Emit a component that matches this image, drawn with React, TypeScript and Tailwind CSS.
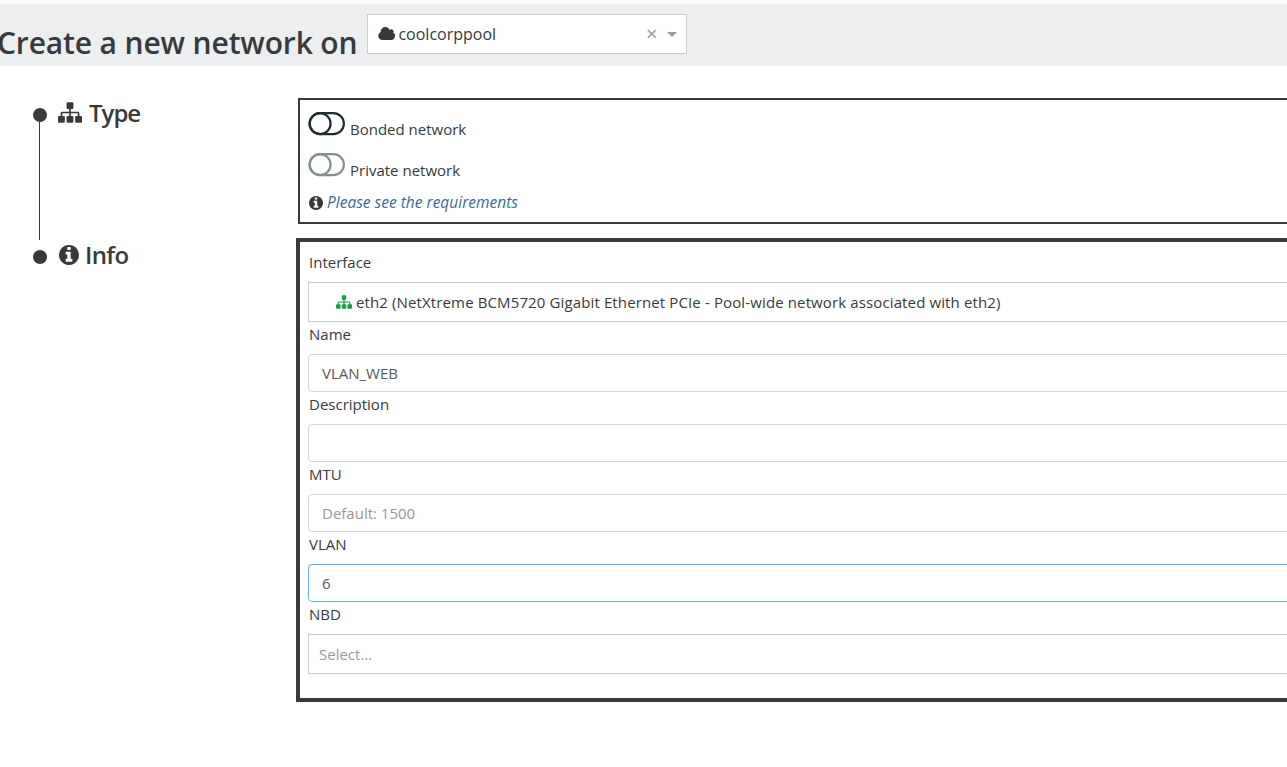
import React from 'react';

const font = "font-['Open_Sans','Noto_Sans',sans-serif]";

const SitemapIcon = ({ className }: { className?: string }) => (
  <svg viewBox="0 128 1792 1536" fill="currentColor" className={className}>
    <path d="M1792 1248v320q0 40-28 68t-68 28h-320q-40 0-68-28t-28-68v-320q0-40 28-68t68-28h96v-192h-512v192h96q40 0 68 28t28 68v320q0 40-28 68t-68 28h-320q-40 0-68-28t-28-68v-320q0-40 28-68t68-28h96v-192h-512v192h96q40 0 68 28t28 68v320q0 40-28 68t-68 28h-320q-40 0-68-28t-28-68v-320q0-40 28-68t68-28h96v-192q0-52 38-90t90-38h512v-192h-96q-40 0-68-28t-28-68v-320q0-40 28-68t68-28h320q40 0 68 28t28 68v320q0 40-28 68t-68 28h-96v192h512q52 0 90 38t38 90v192h96q40 0 68 28t28 68z" />
  </svg>
);

const InfoIcon = ({ className }: { className?: string }) => (
  <svg viewBox="128 128 1536 1536" fill="currentColor" className={className}>
    <path d="M1152 1376v-160q0-14-9-23t-23-9h-96v-512q0-14-9-23t-23-9h-320q-14 0-23 9t-9 23v160q0 14 9 23t23 9h96v320h-96q-14 0-23 9t-9 23v160q0 14 9 23t23 9h448q14 0 23-9t9-23zm-128-896v-160q0-14-9-23t-23-9h-192q-14 0-23 9t-9 23v160q0 14 9 23t23 9h192q14 0 23-9t9-23zm640 416q0 209-103 385.5t-279.5 279.5-385.5 103-385.5-103-279.5-279.5-103-385.5 103-385.5 279.5-279.5 385.5-103 385.5 103 279.5 279.5 103 385.5z" />
  </svg>
);

const CloudIcon = ({ className }: { className?: string }) => (
  <svg viewBox="-64 192 1792 1408" fill="currentColor" className={className}>
    <path d="M1728 1216q0 159-112.5 271.5t-271.5 112.5h-960q-185 0-316.5-131.5t-131.5-316.5q0-132 71-241.5t187-163.5q-2-28-2-43 0-212 150-362t362-150q158 0 286.5 88t187.5 230q70-62 166-62 106 0 181 75t75 181q0 75-41 138 129 30 213 134.5t84 239.5z" />
  </svg>
);

const Toggle = ({ color }: { color: string }) => (
  <svg width="37" height="24" viewBox="0 0 37 24" fill="none" stroke={color} strokeWidth="2.2" className="shrink-0">
    <rect x="1.6" y="1.1" width="34.3" height="21" rx="10.5" />
    <circle cx="12.1" cy="11.6" r="10.5" />
  </svg>
);

const Label = ({ children }: { children: React.ReactNode }) => (
  <div className="ml-px h-8 text-[15px] leading-6 text-[#373a3c]">{children}</div>
);

const Field = ({ label, value, placeholder, focused }: { label: string; value?: string; placeholder?: string; focused?: boolean }) => (
  <>
    <Label>{label}</Label>
    <div
      className={`flex h-[38px] items-center rounded-[4px] border pl-[13px] text-[15px] text-[#55595c] ${
        focused ? 'border-[#66afe9]' : 'border-[#d5d5d5]'
      }`}
    >
      {value ?? <span className="text-[#999999]">{placeholder}</span>}
    </div>
  </>
);

export default function App() {
  return (
    <div className={`h-[767px] w-[1287px] overflow-hidden bg-white text-[#373a3c] ${font}`}>
      <div className="h-1 bg-[#fafafa]" />
      <div className="flex h-[62px] items-start bg-[#eceeef]">
        <h1 className="-ml-[3px] mt-[19px] whitespace-nowrap text-[30px] font-semibold leading-10 tracking-[-0.14px]">
          Create a new network on
        </h1>
        <div className="ml-[10px] mt-[10px] flex h-10 w-[320px] shrink-0 items-center border border-[#cccccc] bg-white pl-[10px] pr-[9px]">
          <CloudIcon className="h-[13px] w-[17px] -translate-y-px text-[#373a3c]" />
          <span className="ml-[3px] text-base font-medium">coolcorppool</span>
          <span className="ml-auto text-[20px] leading-none text-[#999999]">×</span>
          <span className="ml-[10px] h-0 w-0 border-x-[5px] border-t-[5px] border-x-transparent border-t-[#999999]" />
        </div>
      </div>

      <div className="flex pt-8">
        <div className="w-[296px] shrink-0 pl-[33px]">
          <div className="flex h-[142px]">
            <div className="mr-[11px] flex w-[14px] flex-col items-center pt-[10px]">
              <div className="h-[14px] w-[14px] shrink-0 rounded-full bg-[#373a3c]" />
              <div className="mr-px w-px flex-1 bg-[#373a3c]" />
            </div>
            <div className="-mt-px flex h-8 items-center text-2xl font-semibold tracking-[-1px]">
              <SitemapIcon className="mr-[7px] h-[21px] w-6 -translate-y-px" />
              Type
            </div>
          </div>
          <div className="flex">
            <div className="mr-[12px] flex w-[14px] flex-col items-center pt-[10px]">
              <div className="h-[14px] w-[14px] rounded-full bg-[#373a3c]" />
            </div>
            <div className="-mt-px flex h-8 items-center text-2xl font-semibold tracking-[-0.6px]">
              <InfoIcon className="mr-[6px] h-5 w-5" />
              Info
            </div>
          </div>
        </div>

        <div className="w-[1100px] shrink-0">
          <div className="ml-[2px] h-[126px] border-2 border-[#3a3a3a] pl-2 pt-3 text-[15px]">
            <div className="flex h-[41px] items-start">
              <Toggle color="#1f2d33" />
              <span className="ml-[5px] mt-[5px] leading-6">Bonded network</span>
            </div>
            <div className="flex h-[38px] items-start">
              <Toggle color="#829092" />
              <span className="ml-[5px] mt-[5px] leading-6">Private network</span>
            </div>
            <div className="flex h-6 items-center">
              <InfoIcon className="ml-px mr-1 h-[14px] w-[14px]" />
              <em className="text-[15.5px] text-[#3d6a92]">Please see the requirements</em>
            </div>
          </div>

          <div className="mt-[14px] border-4 border-[#3a3a3a] px-2 pb-6 pt-2">
            <Label>Interface</Label>
            <div className="flex h-10 items-center border-y border-l border-[#cccccc] pl-[27px] text-[15px] tracking-[0.125px]">
              <SitemapIcon className="mr-1 h-[14px] w-4 text-[#1e9e4a]" />
              eth2 (NetXtreme BCM5720 Gigabit Ethernet PCIe - Pool-wide network associated with eth2)
            </div>
            <Field label="Name" value="VLAN_WEB" />
            <Field label="Description" value="" />
            <Field label="MTU" placeholder="Default: 1500" />
            <Field label="VLAN" value="6" focused />
            <Label>NBD</Label>
            <div className="flex h-10 items-center border border-[#cccccc] pl-[10px] text-[15px] text-[#999999]">
              Select...
            </div>
          </div>
        </div>
      </div>
    </div>
  );
}
